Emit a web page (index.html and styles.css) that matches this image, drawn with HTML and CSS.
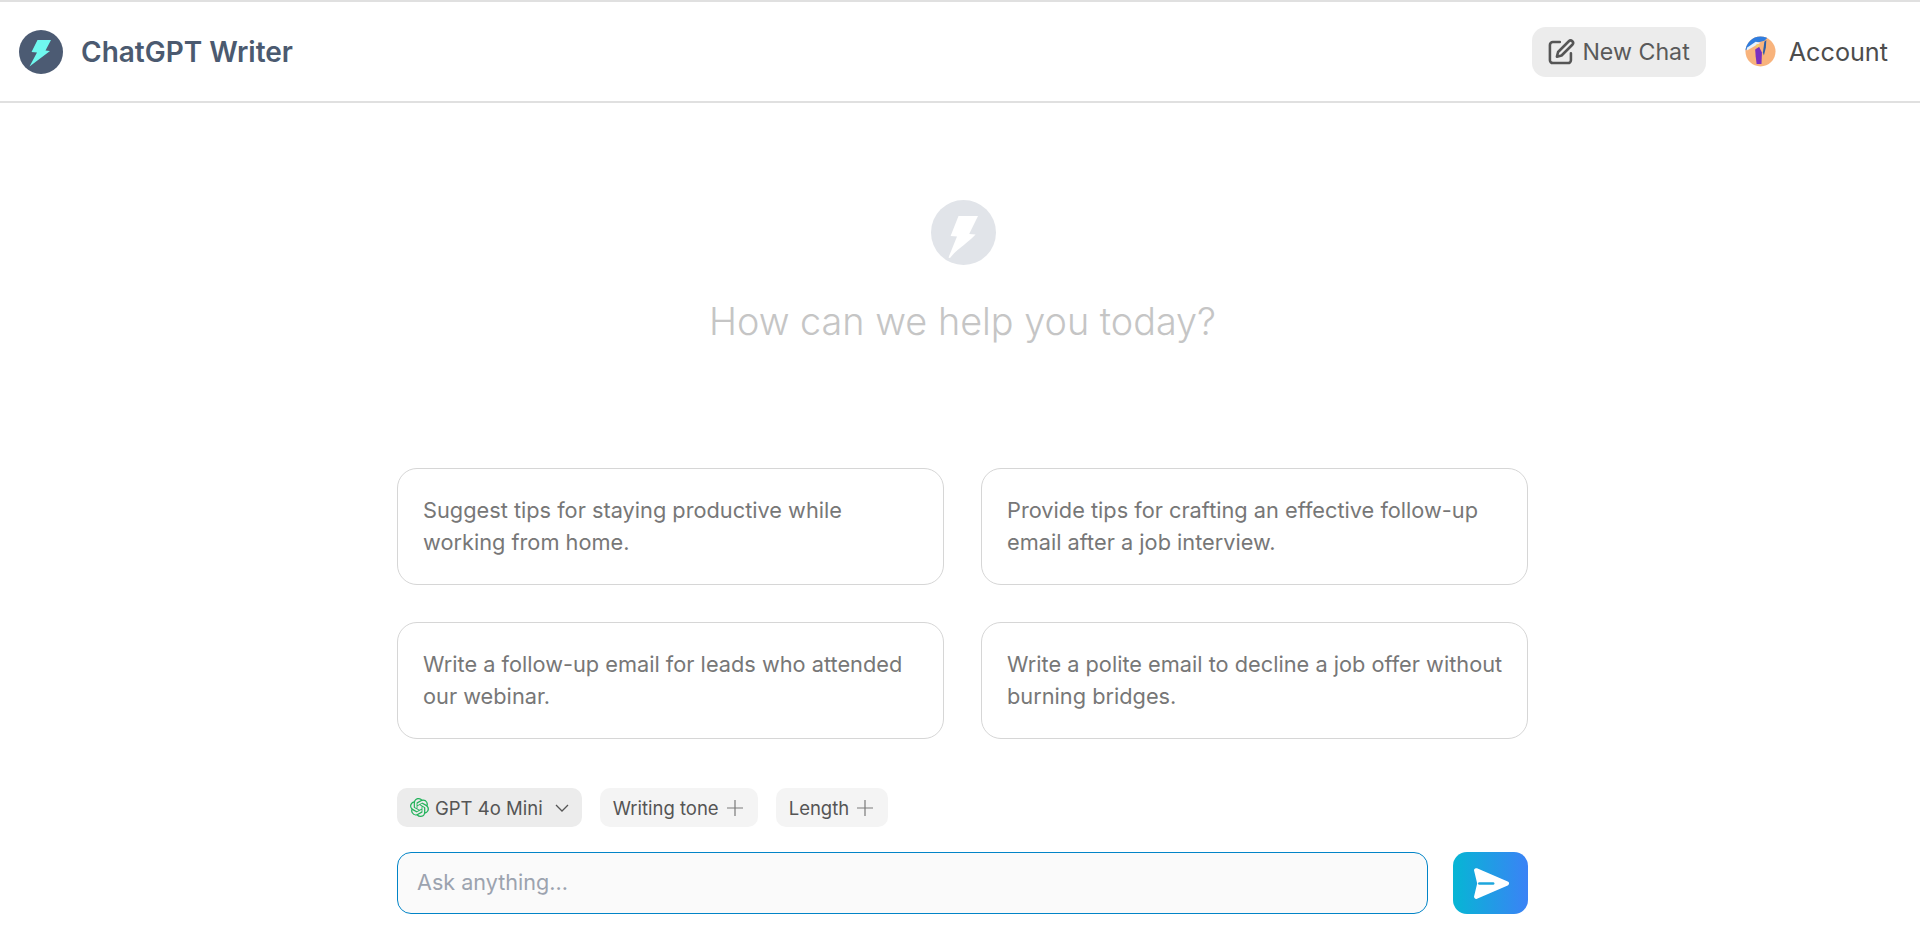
FILE: index.html
```html
<!DOCTYPE html>
<html lang="en">
<head>
<meta charset="utf-8">
<title>ChatGPT Writer</title>
<link rel="stylesheet" href="styles.css">
</head>
<body>
<header class="topbar">
  <div class="brand">
    <svg class="brand-logo" viewBox="0 0 44 44"><circle cx="22" cy="22" r="22" fill="#4c5b73"/><path d="M18.500 10h13.500l-5.500 10.500 4.500.5L10.500 36.500l7.500-14-5.500-.5z" fill="#6ff8ef"/></svg>
    <span class="brand-name">ChatGPT Writer</span>
  </div>
  <nav class="actions">
    <button class="new-chat">
      <svg class="pen" viewBox="0 0 24 24" fill="none" stroke="#555" stroke-width="2.200" stroke-linecap="round" stroke-linejoin="round"><path d="M11 3.500H5a2.500 2.500 0 0 0-2.500 2.500v13A2.500 2.500 0 0 0 5 21.500h13a2.500 2.500 0 0 0 2.500-2.500v-6"/><path d="M18.700 2.800a2.100 2.100 0 0 1 3 3L12.500 15l-4 1 1-4z"/></svg>
      <span>New Chat</span>
    </button>
    <div class="account">
      <svg class="avatar" viewBox="0 0 32 32"><defs><clipPath id="av"><circle cx="16" cy="16" r="15.500"/></clipPath></defs><g clip-path="url(#av)"><rect width="32" height="32" fill="#f8b37c"/><path d="M0 0h25l-5 5-8 2-12 8z" fill="#2f7de0"/><path d="M2 12l9-6 5 1-14 8z" fill="#e8f2fb"/><path d="M18.500 17l1.500-11 2-2-.5 8-2 8z" fill="#2a5fa8"/><path d="M10.500 14l4-3 3 6-.5 12h-5l-1-8z" fill="#7a2fc0"/><circle cx="13" cy="10" r="1.800" fill="#f4cf6a"/></g></svg>
      <span>Account</span>
    </div>
  </nav>
</header>

<main class="page">
  <section class="hero">
    <svg class="hero-logo" viewBox="0 0 65 65"><circle cx="32.500" cy="32.500" r="32.500" fill="#e1e4e9"/><path d="M27.500 16H47l-8.800 18 6.400.6C37 43 26 49 19 58l-1.500-.5L26 36.400 19.600 36z" fill="#fff"/></svg>
    <h1 class="hero-title">How can we help you today?</h1>
  </section>

  <section class="prompts">
    <div class="prompt">Suggest tips for staying productive while working from home.</div>
    <div class="prompt">Provide tips for crafting an effective follow-up email after a job interview.</div>
    <div class="prompt">Write a follow-up email for leads who attended our webinar.</div>
    <div class="prompt">Write a polite email to decline a job offer without burning bridges.</div>
  </section>

  <section class="chips">
    <div class="chip chip-model">
      <svg class="gpt" viewBox="0 0 24 24" fill="#22b25a"><path d="M22.2819 9.8211a5.9847 5.9847 0 0 0-.5157-4.9108 6.0462 6.0462 0 0 0-6.5098-2.9A6.0651 6.0651 0 0 0 4.9807 4.1818a5.9847 5.9847 0 0 0-3.9977 2.9 6.0462 6.0462 0 0 0 .7427 7.0966 5.98 5.98 0 0 0 .511 4.9107 6.051 6.051 0 0 0 6.5146 2.9001A5.9847 5.9847 0 0 0 13.2599 24a6.0557 6.0557 0 0 0 5.7718-4.2058 5.9894 5.9894 0 0 0 3.9977-2.9001 6.0557 6.0557 0 0 0-.7475-7.0729zm-9.022 12.6081a4.4755 4.4755 0 0 1-2.8764-1.0408l.1419-.0804 4.7783-2.7582a.7948.7948 0 0 0 .3927-.6813v-6.7369l2.02 1.1686a.071.071 0 0 1 .038.052v5.5826a4.504 4.504 0 0 1-4.4945 4.4944zm-9.6607-4.1254a4.4708 4.4708 0 0 1-.5346-3.0137l.142.0852 4.783 2.7582a.7712.7712 0 0 0 .7806 0l5.8428-3.3685v2.3324a.0804.0804 0 0 1-.0332.0615L9.74 19.9502a4.4992 4.4992 0 0 1-6.1408-1.6464zM2.3408 7.8956a4.485 4.485 0 0 1 2.3655-1.9728V11.6a.7664.7664 0 0 0 .3879.6765l5.8144 3.3543-2.0201 1.1685a.0757.0757 0 0 1-.071 0l-4.8303-2.7865A4.504 4.504 0 0 1 2.3408 7.872zm16.5963 3.8558L13.1038 8.364 15.1192 7.2a.0757.0757 0 0 1 .071 0l4.8303 2.7913a4.4944 4.4944 0 0 1-.6765 8.1042v-5.6772a.79.79 0 0 0-.407-.667zm2.0107-3.0231l-.142-.0852-4.7735-2.7818a.7759.7759 0 0 0-.7854 0L9.409 9.2297V6.8974a.0662.0662 0 0 1 .0284-.0615l4.8303-2.7866a4.4992 4.4992 0 0 1 6.6802 4.66zM8.3065 12.863l-2.02-1.1638a.0804.0804 0 0 1-.038-.0567V6.0742a4.4992 4.4992 0 0 1 7.3757-3.4537l-.142.0805L8.704 5.459a.7948.7948 0 0 0-.3927.6813zm1.0976-2.3654l2.602-1.4998 2.6069 1.4998v2.9994l-2.5974 1.4997-2.6067-1.4997Z"/></svg>
      <span>GPT 4o Mini</span>
      <svg class="chev" viewBox="0 0 14 8" fill="none" stroke="#555" stroke-width="1.300"><path d="M1 1l6 6 6-6"/></svg>
    </div>
    <div class="chip">
      <span>Writing tone</span>
      <svg class="plus" viewBox="0 0 16 16" stroke="#7a7a7a" stroke-width="1.200"><path d="M8 0v16M0 8h16"/></svg>
    </div>
    <div class="chip">
      <span>Length</span>
      <svg class="plus" viewBox="0 0 16 16" stroke="#7a7a7a" stroke-width="1.200"><path d="M8 0v16M0 8h16"/></svg>
    </div>
  </section>

  <section class="composer">
    <div class="ask">Ask anything...</div>
    <button class="send">
      <svg viewBox="0 0 34 31" class="send-icon"><path d="M3 3L32 15.500 3 28l3-12.500z" fill="#fff" stroke="#fff" stroke-width="4" stroke-linejoin="round"/><path d="M6 15.500h13" stroke="#1ea6dd" stroke-width="2.500" stroke-linecap="round"/></svg>
    </button>
  </section>
</main>
</body>
</html>
```
FILE: styles.css
```css
* { box-sizing: border-box; }
html, body { margin: 0; height: 100%; background: #fff; }
body { font-family: Inter, "Liberation Sans", sans-serif; overflow: hidden; }

.topbar {
  display: flex;
  align-items: center;
  justify-content: space-between;
  height: 103px;
  padding: 0 32px 0 19px;
  border-top: 2px solid #e0e0e0;
  border-bottom: 2px solid #e0e0e0;
}
.brand { display: flex; align-items: center; gap: 18px; }
.brand-logo { width: 44px; height: 44px; display: block; }
.brand-name { font-size: 28px; font-weight: 600; color: #4b5a70; }

.actions { display: flex; align-items: center; gap: 39px; }
.new-chat {
  display: flex;
  align-items: center;
  gap: 7px;
  height: 50px;
  padding: 0 16px 0 15px;
  border: 0;
  border-radius: 14px;
  background: #ececec;
  font-family: inherit;
  font-size: 23.2px;
  color: #5a5a5a;
}
.pen { width: 28px; height: 28px; display: block; }
.account { display: flex; align-items: center; gap: 13px; font-size: 25.2px; font-weight: 400; color: #4d4d4d; }
.avatar { width: 31px; height: 31px; display: block; }

.page { width: 1131px; margin-left: 397px; display: flex; flex-direction: column; }

.hero { display: flex; flex-direction: column; align-items: center; padding-top: 97px; }
.hero-logo { width: 65px; height: 65px; margin-left: 2px; display: block; }
.hero-title { margin: 34px 0 0; font-size: 37.8px; font-weight: 300; color: #c5c5c5; line-height: 44px; }

.prompts {
  margin-top: 125px;
  display: grid;
  grid-template-columns: 1fr 1fr;
  gap: 37px;
}
.prompt {
  height: 117px;
  padding: 25px 24px 25px 25px;
  border: 1px solid #d6d6d6;
  border-radius: 20px;
  font-size: 21.75px;
  line-height: 32px;
  color: #777;
}

.chips { margin-top: 49px; display: flex; gap: 18px; }
.chip {
  display: flex;
  align-items: center;
  gap: 8px;
  height: 39px;
  padding: 0 15px 0 13px;
  border-radius: 10px;
  background: #f4f4f4;
  font-size: 18.5px;
  color: #555;
}
.chip-model { background: #ececec; gap: 6px; padding: 0 13px; }
.gpt { width: 19px; height: 19px; display: block; }
.chev { width: 14px; height: 8px; margin-left: 6px; display: block; }
.plus { width: 16px; height: 16px; display: block; }

.composer { margin-top: 25px; display: flex; gap: 25px; }
.ask {
  flex: 1;
  height: 62px;
  padding: 0 19px 2px;
  display: flex;
  align-items: center;
  border: 1px solid #0284c7;
  border-radius: 14px;
  background: #fafafa;
  font-size: 21.6px;
  color: #9ca3af;
}
.send {
  width: 75px;
  height: 62px;
  padding: 0;
  border: 0;
  border-radius: 14px;
  background: linear-gradient(90deg, #06b6d4, #3b82f6);
  display: flex;
  align-items: center;
  justify-content: center;
}
.send-icon { width: 36px; height: 33px; display: block; }
```
